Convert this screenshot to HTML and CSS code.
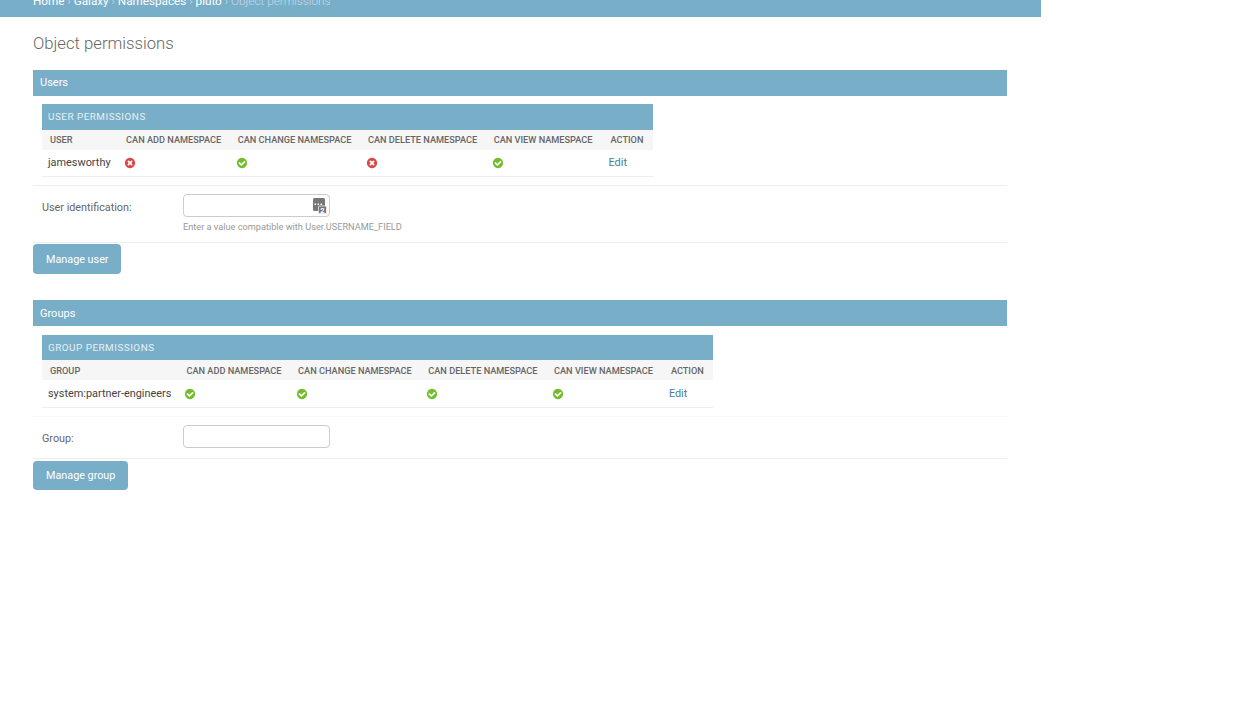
FILE: index.html
```html
<!DOCTYPE html>
<html lang="en">
<head>
    <meta charset="UTF-8">
    <title>Object permissions</title>
    <link rel="stylesheet" href="styles.css">
</head>
<body>
    <svg class="defs" width="0" height="0">
        <symbol id="icon-yes" viewBox="0 0 1792 1792">
            <path fill="#70bf2b" d="M1412 734q0-28-18-46l-91-90q-19-19-45-19t-45 19l-408 407-226-226q-19-19-45-19t-45 19l-91 90q-18 18-18 46 0 27 18 45l362 362q19 19 45 19 27 0 46-19l543-543q18-18 18-45zm252 162q0 209-103 385.5t-279.5 279.5-385.5 103-385.5-103-279.5-279.5-103-385.5 103-385.5 279.5-279.5 385.5-103 385.5 103 279.5 279.5 103 385.5z"/>
        </symbol>
        <symbol id="icon-no" viewBox="0 0 1792 1792">
            <path fill="#dd4646" d="M1277 1122q0-26-19-45l-181-181 181-181q19-19 19-45 0-27-19-46l-90-90q-19-19-46-19-26 0-45 19l-181 181-181-181q-19-19-45-19-27 0-46 19l-90 90q-19 19-19 46 0 26 19 45l181 181-181 181q-19 19-19 45 0 27 19 46l90 90q19 19 46 19 26 0 45-19l181-181 181 181q19 19 45 19 27 0 46-19l90-90q19-19 19-46zm387-226q0 209-103 385.5t-279.5 279.5-385.5 103-385.5-103-279.5-279.5-103-385.5 103-385.5 279.5-279.5 385.5-103 385.5 103 279.5 279.5 103 385.5z"/>
        </symbol>
    </svg>

    <div class="page">
        <div class="breadcrumbs">
            <a href="#">Home</a> › <a href="#">Galaxy</a> › <a href="#">Namespaces</a> › <a href="#">pluto</a> › Object permissions
        </div>

        <div class="content">
            <h1>Object permissions</h1>

            <!-- Users -->
            <form class="module users-module">
                <h2>Users</h2>
                <table>
                    <caption>User permissions</caption>
                    <thead>
                        <tr>
                            <th>User</th>
                            <th>Can add namespace</th>
                            <th>Can change namespace</th>
                            <th>Can delete namespace</th>
                            <th class="view-col">Can view namespace</th>
                            <th>Action</th>
                        </tr>
                    </thead>
                    <tbody>
                        <tr>
                            <td>jamesworthy</td>
                            <td><svg class="icon"><use href="#icon-no"/></svg></td>
                            <td><svg class="icon"><use href="#icon-yes"/></svg></td>
                            <td><svg class="icon"><use href="#icon-no"/></svg></td>
                            <td><svg class="icon"><use href="#icon-yes"/></svg></td>
                            <td><a href="#" class="edit">Edit</a></td>
                        </tr>
                    </tbody>
                </table>
                <div class="form-row user-row">
                    <label class="field-label" for="user">User identification:</label>
                    <div class="field">
                        <div class="input-wrap">
                            <input type="text" id="user">
                            <svg class="autofill" viewBox="0 0 16 16" width="16" height="16">
                                <rect x="2" y="0" width="12" height="13" rx="1.500" fill="#777"/>
                                <rect x="3.500" y="5.500" width="1.500" height="1.500" fill="#fff"/>
                                <rect x="6.500" y="5.500" width="1.500" height="1.500" fill="#fff"/>
                                <rect x="9.500" y="5.500" width="1.500" height="1.500" fill="#fff"/>
                                <rect x="7.500" y="8" width="8" height="7.500" rx="1" fill="#777" stroke="#fff" stroke-width="0.700"/>
                                <text x="11.500" y="15" class="autofill-num">2</text>
                            </svg>
                        </div>
                        <p class="help">Enter a value compatible with User.USERNAME_FIELD</p>
                    </div>
                </div>
                <div class="actions"><button type="button" class="btn">Manage user</button></div>
            </form>

            <!-- Groups -->
            <form class="module groups-module">
                <h2>Groups</h2>
                <table>
                    <caption>Group permissions</caption>
                    <thead>
                        <tr>
                            <th>Group</th>
                            <th>Can add namespace</th>
                            <th>Can change namespace</th>
                            <th>Can delete namespace</th>
                            <th class="view-col">Can view namespace</th>
                            <th>Action</th>
                        </tr>
                    </thead>
                    <tbody>
                        <tr>
                            <td>system:partner-engineers</td>
                            <td><svg class="icon"><use href="#icon-yes"/></svg></td>
                            <td><svg class="icon"><use href="#icon-yes"/></svg></td>
                            <td><svg class="icon"><use href="#icon-yes"/></svg></td>
                            <td><svg class="icon"><use href="#icon-yes"/></svg></td>
                            <td><a href="#" class="edit">Edit</a></td>
                        </tr>
                    </tbody>
                </table>
                <div class="form-row group-row">
                    <label class="field-label" for="group">Group:</label>
                    <div class="field">
                        <div class="input-wrap">
                            <input type="text" id="group">
                        </div>
                    </div>
                </div>
                <div class="actions"><button type="button" class="btn">Manage group</button></div>
            </form>
        </div>
    </div>
</body>
</html>
```

FILE: styles.css
```css
body {
    margin: 0;
    font-family: Roboto, "Liberation Sans", Arial, sans-serif;
    font-size: 12px;
    color: #333;
    background: #fff;
    overflow: hidden;
}

.defs {
    position: absolute;
}

.page {
    width: 1041px;
}

/* breadcrumbs, the page is scrolled so the top of it is cut off */
.breadcrumbs {
    margin-top: -7px;
    padding: 0 33px 8px;
    line-height: 16px;
    font-size: 11.800px;
    font-weight: 300;
    color: #c4dce8;
    background: #79aec8;
}

.breadcrumbs a {
    font-size: 11.700px;
    color: #fff;
    font-weight: 400;
    text-decoration: none;
}

.content {
    padding: 0 34px 0 33px;
}

h1 {
    margin: 0;
    padding-top: 16px;
    height: 37px;
    line-height: 21px;
    font-size: 16.700px;
    font-weight: 300;
    color: #666;
}

/* modules */
.module {
    display: block;
}

.users-module {
    margin-bottom: 26px;
}

.module h2 {
    margin: 0;
    height: 26px;
    padding: 0 7px;
    line-height: 27px;
    font-size: 11px;
    font-weight: 400;
    color: #fff;
    background: #79aec8;
}

.users-module h2 {
    line-height: 25px;
}

/* tables */
table {
    margin: 8px 0 8px 9px;
    border-collapse: collapse;
}

.groups-module table {
    margin-top: 9px;
}

caption {
    height: 26px;
    padding: 0 6px;
    line-height: 26px;
    text-align: left;
    text-transform: uppercase;
    font-size: 9.900px;
    letter-spacing: 0.5px;
    color: #e6f0f5;
    background: #79aec8;
}

.groups-module caption {
    height: 25px;
    line-height: 25px;
}

th {
    height: 20px;
    padding: 0 8.500px 0 8px;
    text-align: left;
    text-transform: uppercase;
    white-space: nowrap;
    font-size: 9.200px;
    font-weight: 500;
    color: #666;
    background: #f6f6f6;
}

th:last-child {
    padding-right: 9.500px;
}

.users-module th {
    height: 19px;
    padding-bottom: 1px;
}

th.view-col {
    padding-right: 10px;
}

td {
    height: 26px;
    padding: 0 7.500px 0 6px;
    line-height: 16px;
    font-size: 10.900px;
    color: #444;
    border-bottom: 1px solid #eee;
    white-space: nowrap;
}

.groups-module td {
    height: 27px;
    padding-right: 7px;
}

.icon {
    display: block;
    width: 12px;
    height: 12px;
}

.edit {
    color: #447e9b;
    text-decoration: none;
}

/* form rows */
.form-row {
    display: flex;
    padding: 8px 9px;
    border-top: 1px solid #eee;
    border-bottom: 1px solid #eee;
}

.user-row {
    height: 40px;
}

.group-row {
    height: 25px;
    border-top-color: #f8f8f8;
}

.field-label {
    width: 141px;
    padding-top: 6px;
    line-height: 16px;
    font-size: 10.800px;
    color: #666;
}

.input-wrap {
    position: relative;
    width: 147px;
    height: 23px;
}

input {
    box-sizing: border-box;
    display: block;
    width: 100%;
    height: 100%;
    margin: 0;
    padding: 2px 5px;
    border: 1px solid #ccc;
    border-radius: 4px;
    background: #fff;
}

.autofill {
    position: absolute;
    top: 4px;
    right: 3px;
}

.autofill-num {
    font-size: 7.500px;
    font-weight: 700;
    fill: #fff;
    text-anchor: middle;
}

.help {
    margin: 3px 0 0;
    line-height: 13px;
    font-size: 9.200px;
    color: #999;
}

.actions {
    padding-top: 1px;
}

.groups-module .actions {
    padding-top: 2px;
}

.btn {
    display: block;
    height: 30px;
    padding: 0 12.500px 0 13px;
    border: 0;
    border-radius: 4px;
    font-family: inherit;
    font-size: 10.800px;
    color: #fff;
    background: #79aec8;
}

.groups-module .btn {
    height: 29px;
}
```
